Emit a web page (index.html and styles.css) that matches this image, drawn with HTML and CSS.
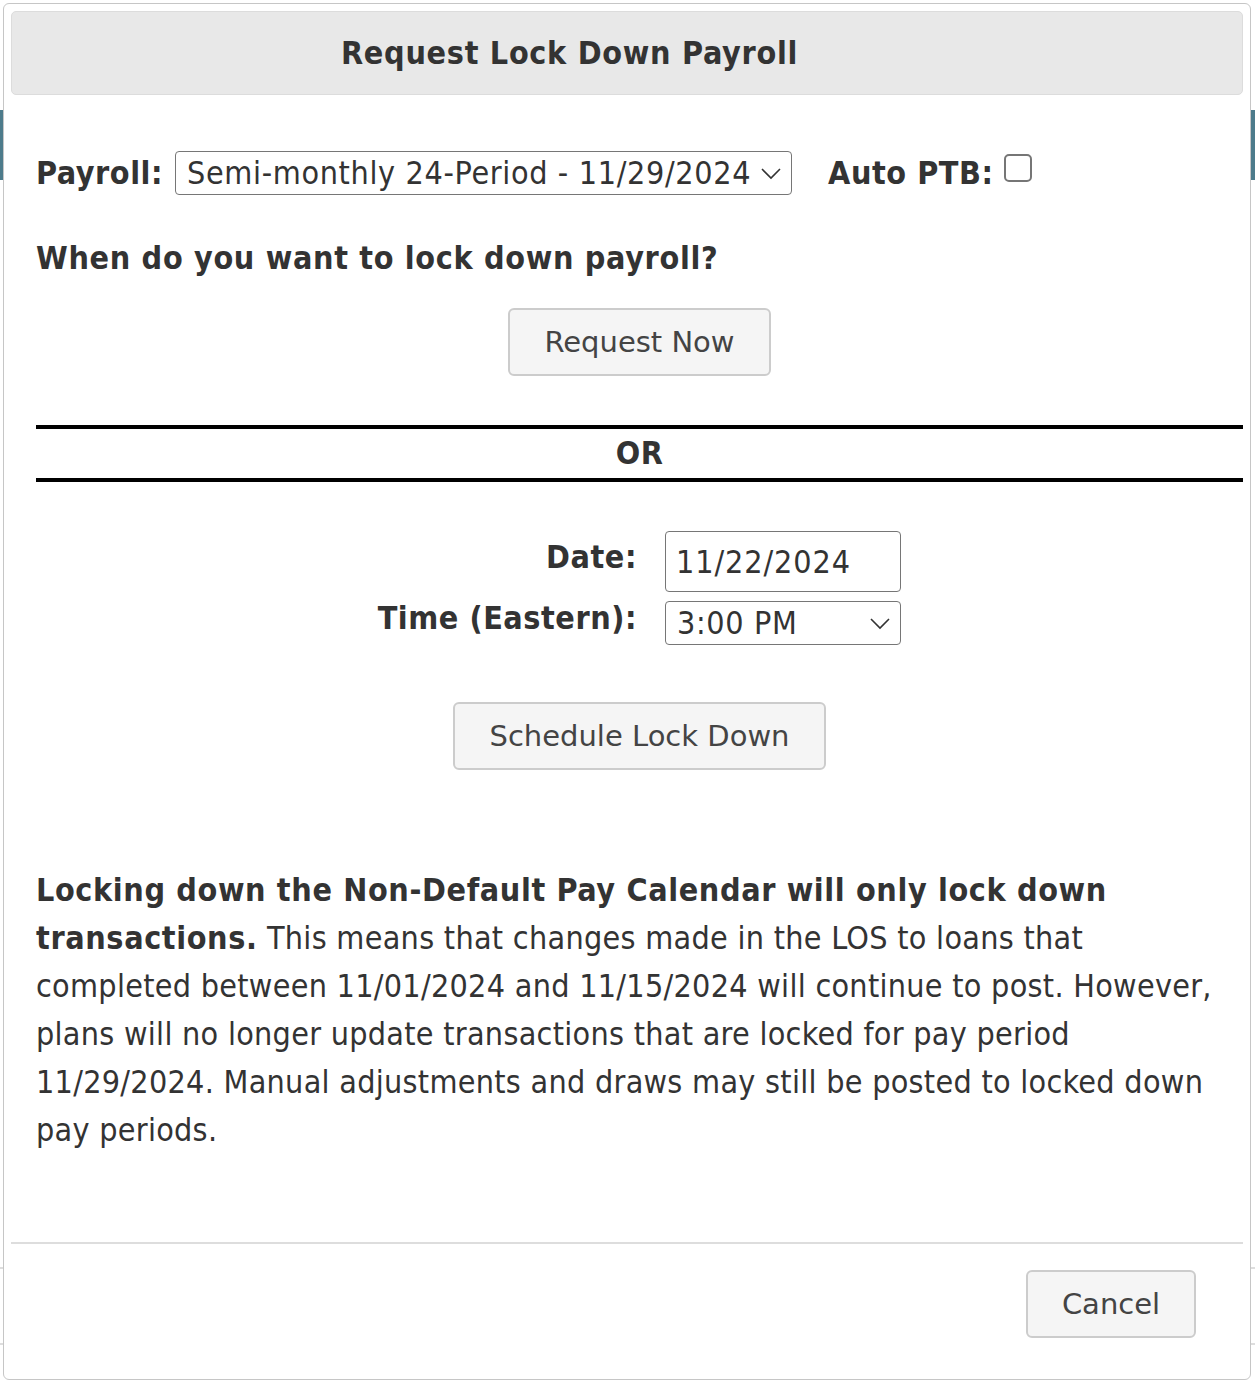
FILE: index.html
```html
<!DOCTYPE html>
<html lang="en">
<head>
<meta charset="utf-8">
<title>Request Lock Down Payroll</title>
<link rel="stylesheet" href="styles.css">
</head>
<body>
<div class="page">
  <div class="page-bar"></div>
  <div class="page-line page-line-1"></div>
  <div class="page-line page-line-2"></div>
</div>

<div class="modal">
  <div class="modal-header">
    <h1 class="modal-title">Request Lock Down Payroll</h1>
  </div>

  <div class="modal-body">
    <div class="payroll-row">
      <label class="field-label" for="payroll">Payroll:</label>
      <div class="select-wrap select-payroll">
        <select id="payroll" class="select">
          <option>Semi-monthly 24-Period - 11/29/2024</option>
        </select>
        <svg class="chevron" viewBox="0 0 20 12" width="20" height="12"><path d="M1 1 L10 10 L19 1" fill="none" stroke="#333" stroke-width="1.6"/></svg>
      </div>
      <label class="field-label auto-label" for="autoptb">Auto PTB:</label>
      <input id="autoptb" class="checkbox" type="checkbox">
    </div>

    <h2 class="question">When do you want to lock down payroll?</h2>

    <div class="btn-row btn-row-now">
      <button class="btn btn-now" type="button">Request Now</button>
    </div>

    <div class="or-block">
      <div class="or-line"></div>
      <div class="or-text">OR</div>
      <div class="or-line"></div>
    </div>

    <div class="schedule-grid">
      <label class="grid-label" for="date">Date:</label>
      <input id="date" class="date-input" type="text" value="11/22/2024">
      <label class="grid-label" for="time">Time (Eastern):</label>
      <div class="select-wrap select-time">
        <select id="time" class="select">
          <option>3:00 PM</option>
        </select>
        <svg class="chevron" viewBox="0 0 20 12" width="20" height="12"><path d="M1 1 L10 10 L19 1" fill="none" stroke="#333" stroke-width="1.6"/></svg>
      </div>
    </div>

    <div class="btn-row btn-row-schedule">
      <button class="btn btn-schedule" type="button">Schedule Lock Down</button>
    </div>

    <p class="notice"><strong>Locking down the Non-Default Pay Calendar will only lock down transactions.</strong> This means that changes made in the LOS to loans that completed between 11/01/2024 and 11/15/2024 will continue to post. However, plans will no longer update transactions that are locked for pay period 11/29/2024. Manual adjustments and draws may still be posted to locked down pay periods.</p>
  </div>

  <div class="modal-footer">
    <button class="btn btn-cancel" type="button">Cancel</button>
  </div>
</div>
</body>
</html>
```

FILE: styles.css
```css
* { box-sizing: border-box; }

html, body {
  margin: 0;
  padding: 0;
  background: #ffffff;
}

body {
  position: relative;
  width: 1255px;
  height: 1381px;
  overflow: hidden;
  font-family: "DejaVu Sans", "Noto Sans", sans-serif;
  font-stretch: condensed;
  letter-spacing: 0.55px;
  color: #333333;
}

/* background page behind the dialog */
.page {
  padding-top: 110px;
}
.page-bar {
  height: 70px;
  background: #4d7b8b;
}
.page-line {
  height: 2px;
  background: #dddddd;
}
.page-line-1 { margin-top: 1087px; }
.page-line-2 { margin-top: 74px; }

/* dialog */
.modal {
  position: absolute;
  left: 3px;
  top: 3px;
  width: 1248px;
  height: 1377px;
  background: #ffffff;
  border: 1px solid #c6c6c6;
  border-radius: 6px;
  padding: 7px;
  display: flex;
  flex-direction: column;
}

.modal-header {
  height: 84px;
  background: #e8e8e8;
  border: 1px solid #dcdcdc;
  border-radius: 5px;
  display: flex;
  align-items: center;
  justify-content: center;
  padding-right: 115px;
}

.modal-title {
  margin: 0;
  font-size: 32px;
  font-weight: bold;
  color: #333333;
  line-height: 40px;
  letter-spacing: 0.7px;
}

.modal-body {
  padding: 56px 0 0 25px;
  flex: 1;
}

.payroll-row {
  display: flex;
  align-items: center;
  height: 44px;
}

.field-label {
  font-size: 32px;
  font-weight: bold;
  line-height: 44px;
}

.select-wrap {
  position: relative;
  margin-left: 12px;
}

.select {
  -webkit-appearance: none;
  appearance: none;
  font-family: "DejaVu Sans", "Noto Sans", sans-serif;
  font-stretch: condensed;
  font-size: 32px;
  letter-spacing: 0.65px;
  color: #333333;
  background: #ffffff;
  border: 1px solid #767676;
  border-radius: 4px;
  height: 44px;
  padding: 0 40px 0 11px;
  margin: 0;
}

.select-payroll .select { width: 617px; }

.chevron {
  position: absolute;
  right: 11px;
  top: 17px;
  pointer-events: none;
}

.auto-label {
  margin-left: 36px;
}

.checkbox {
  -webkit-appearance: none;
  appearance: none;
  width: 28px;
  height: 28px;
  margin: 3px 0 0 10px;
  border: 2px solid #767676;
  border-radius: 5px;
  background: #ffffff;
  align-self: flex-start;
}

.question {
  margin: 39px 0 0 0;
  font-size: 32px;
  font-weight: bold;
  line-height: 48px;
  letter-spacing: 0.66px;
}

.btn-row {
  display: flex;
  justify-content: center;
}

.btn-row-now { margin-top: 26px; }

.btn {
  font-family: "DejaVu Sans", "Noto Sans", sans-serif;
  font-stretch: normal;
  font-size: 29px;
  letter-spacing: 0;
  color: #444444;
  background: #f5f5f5;
  border: 2px solid #cccccc;
  border-radius: 6px;
  height: 68px;
  padding: 0;
  margin: 0;
  cursor: pointer;
}

.btn-now { width: 263px; }
.btn-schedule { width: 373px; }

.or-block {
  margin-top: 49px;
}

.or-line {
  height: 4px;
  background: #000000;
}

.or-text {
  text-align: center;
  font-size: 32px;
  font-weight: bold;
  line-height: 49px;
}

.schedule-grid {
  margin-top: 49px;
  display: grid;
  grid-template-columns: 601px 236px;
  column-gap: 28px;
  row-gap: 9px;
  align-items: center;
}

.grid-label {
  text-align: right;
  font-size: 32px;
  font-weight: bold;
  line-height: 34px;
  margin-bottom: 10px;
}

.date-input {
  font-family: "DejaVu Sans", "Noto Sans", sans-serif;
  font-stretch: condensed;
  font-size: 32px;
  letter-spacing: 0.9px;
  color: #333333;
  width: 236px;
  height: 61px;
  padding: 0 10px;
  border: 1px solid #767676;
  border-radius: 4px;
  margin: 0;
}

.select-time { margin-left: 0; }
.select-time .select { width: 236px; }

.btn-row-schedule { margin-top: 57px; }

.notice {
  margin: 96px 0 0 0;
  font-size: 32px;
  line-height: 48px;
  letter-spacing: 0.28px;
}

.notice strong {
  font-weight: bold;
  letter-spacing: 0.62px;
}

.modal-footer {
  border-top: 2px solid #dddddd;
  height: 130px;
  display: flex;
  justify-content: flex-end;
  align-items: flex-start;
  padding: 26px 47px 0 0;
}

.btn-cancel {
  width: 170px;
  height: 68px;
}
```
